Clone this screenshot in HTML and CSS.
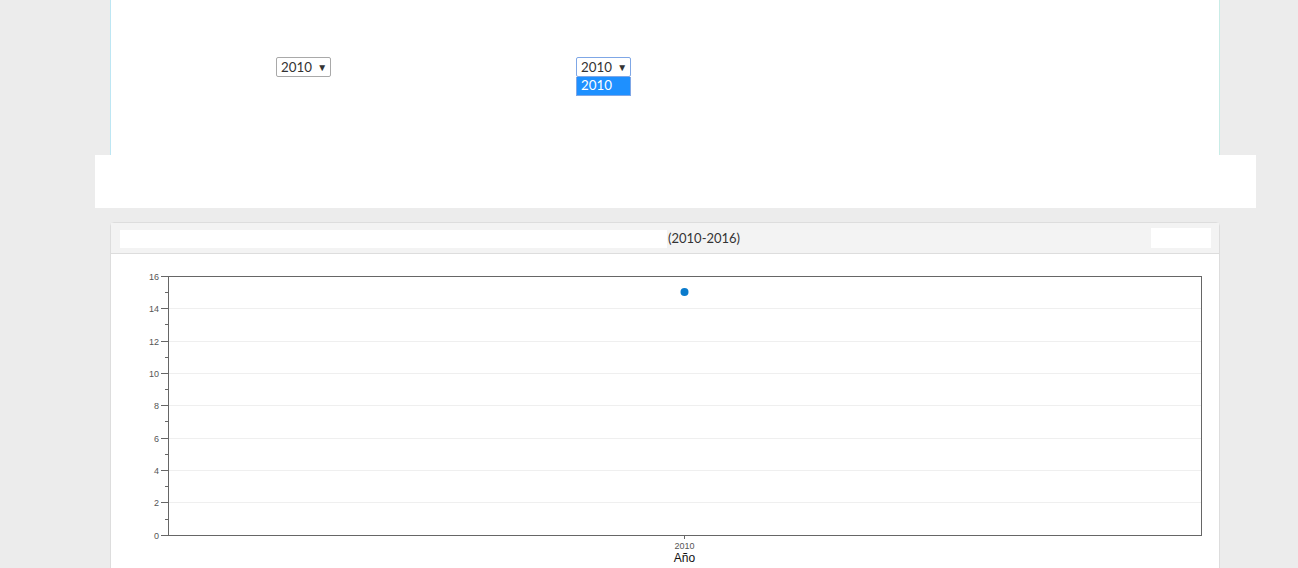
FILE: index.html
```html
<!DOCTYPE html>
<html lang="es">
<head>
    <meta charset="UTF-8">
    <title>Indicador (2010-2016)</title>
    <link rel="stylesheet" href="styles.css">
</head>
<body>
    <div class="filtros">
        <div class="selector">
            <div class="caja">2010 <span class="flecha">&#9660;</span></div>
        </div>
        <div class="selector abierto">
            <div class="caja">2010 <span class="flecha">&#9660;</span></div>
            <div class="opciones">
                <div class="opcion activa">2010</div>
            </div>
        </div>
    </div>

    <div class="banda"></div>

    <div class="panel">
        <div class="panel-cabecera">
            <div class="hueco"></div>
            <span class="titulo">(2010-2016)</span>
            <div class="hueco-derecho"></div>
        </div>
        <div class="panel-cuerpo">
            <svg class="grafica" width="1108" height="320" viewBox="0 0 1108 320">
                <!-- lineas guia -->
                <g stroke="#efefef" stroke-width="1">
                    <line x1="57" x2="1090" y1="248.5" y2="248.5"/>
                    <line x1="57" x2="1090" y1="216.5" y2="216.5"/>
                    <line x1="57" x2="1090" y1="184.5" y2="184.5"/>
                    <line x1="57" x2="1090" y1="151.5" y2="151.5"/>
                    <line x1="57" x2="1090" y1="119.5" y2="119.5"/>
                    <line x1="57" x2="1090" y1="87.5" y2="87.5"/>
                    <line x1="57" x2="1090" y1="54.5" y2="54.5"/>
                </g>
                <rect x="57.5" y="22.5" width="1033" height="259" fill="none" stroke="#666"/>
                <!-- eje y -->
                <g stroke="#666" stroke-width="1">
                    <line x1="50" x2="57" y1="281.5" y2="281.5"/>
                    <line x1="54" x2="57" y1="265.5" y2="265.5"/>
                    <line x1="50" x2="57" y1="248.5" y2="248.5"/>
                    <line x1="54" x2="57" y1="232.5" y2="232.5"/>
                    <line x1="50" x2="57" y1="216.5" y2="216.5"/>
                    <line x1="54" x2="57" y1="200.5" y2="200.5"/>
                    <line x1="50" x2="57" y1="184.5" y2="184.5"/>
                    <line x1="54" x2="57" y1="167.5" y2="167.5"/>
                    <line x1="50" x2="57" y1="151.5" y2="151.5"/>
                    <line x1="54" x2="57" y1="135.5" y2="135.5"/>
                    <line x1="50" x2="57" y1="119.5" y2="119.5"/>
                    <line x1="54" x2="57" y1="103.5" y2="103.5"/>
                    <line x1="50" x2="57" y1="87.5" y2="87.5"/>
                    <line x1="54" x2="57" y1="70.5" y2="70.5"/>
                    <line x1="50" x2="57" y1="54.5" y2="54.5"/>
                    <line x1="54" x2="57" y1="38.5" y2="38.5"/>
                    <line x1="50" x2="57" y1="22.5" y2="22.5"/>
                    <line x1="573.5" x2="573.5" y1="282" y2="285"/>
                </g>
                <g class="etiquetas" text-anchor="end">
                    <text x="48" y="284.5">0</text>
                    <text x="48" y="251.5">2</text>
                    <text x="48" y="219.5">4</text>
                    <text x="48" y="187.5">6</text>
                    <text x="48" y="154.5">8</text>
                    <text x="48" y="122.5">10</text>
                    <text x="48" y="90.5">12</text>
                    <text x="48" y="57.5">14</text>
                    <text x="48" y="25.5">16</text>
                </g>
                <text class="etiquetas" x="573.5" y="295" text-anchor="middle">2010</text>
                <text class="eje-titulo" x="573.5" y="308" text-anchor="middle">Año</text>
                <circle cx="573.5" cy="38" r="4" fill="#0a7bcc"/>
            </svg>
        </div>
    </div>
</body>
</html>
```

FILE: styles.css
```css
* {
    margin: 0;
    padding: 0;
    box-sizing: border-box;
}

body {
    background: #ececec;
    font-family: Lato, "Liberation Sans", sans-serif;
    color: #333;
    overflow: hidden;
}

.filtros {
    margin-left: 110px;
    width: 1110px;
    height: 155px;
    background: #fff;
    border-left: 1px solid #bde6f3;
    border-right: 1px solid #c9ece6;
    display: flex;
    gap: 245px;
    padding: 57px 0 0 165px;
}

.selector {
    position: relative;
    width: 55px;
}

.caja {
    height: 20px;
    border: 1px solid #a9a9a9;
    border-radius: 2px;
    font-size: 13.33px;
    line-height: 18px;
    padding-left: 4px;
    color: #333;
    background: #fff;
}

.flecha {
    font-size: 10px;
    margin-left: 2px;
    vertical-align: 1px;
    color: #333;
}

.abierto .caja {
    border-color: #7fa7e6;
}

.opciones {
    position: absolute;
    top: 20px;
    left: 0;
    width: 55px;
    border: 1px solid #7fa7e6;
    border-top: none;
    background: #fff;
}

.opcion {
    height: 18px;
    font-size: 13.33px;
    line-height: 17px;
    padding-left: 4px;
}

.opcion.activa {
    background: #1e90ff;
    color: #fff;
}

.banda {
    margin-left: 95px;
    width: 1161px;
    height: 53px;
    background: #fff;
}

.panel {
    margin: 14px 0 0 110px;
    width: 1110px;
    background: #fff;
    border: 1px solid #ddd;
    border-radius: 4px 4px 0 0;
}

.panel-cabecera {
    height: 31px;
    background: #f3f3f3;
    border-bottom: 1px solid #ddd;
    display: flex;
    align-items: center;
    padding: 0 8px 0 9px;
}

.hueco {
    width: 547px;
    height: 18px;
    background: #fff;
    margin-top: 1px;
}

.titulo {
    font-size: 13px;
    margin-left: 1px;
    color: #333;
}

.hueco-derecho {
    width: 60px;
    height: 20px;
    background: #fff;
    margin-left: auto;
}

.panel-cuerpo {
    height: 320px;
}

.grafica {
    display: block;
}

.etiquetas {
    font-family: "Liberation Sans", Arial, sans-serif;
    font-size: 9px;
    fill: #555;
}

.eje-titulo {
    font-family: "Liberation Sans", Arial, sans-serif;
    font-size: 12px;
    fill: #111;
}
```
